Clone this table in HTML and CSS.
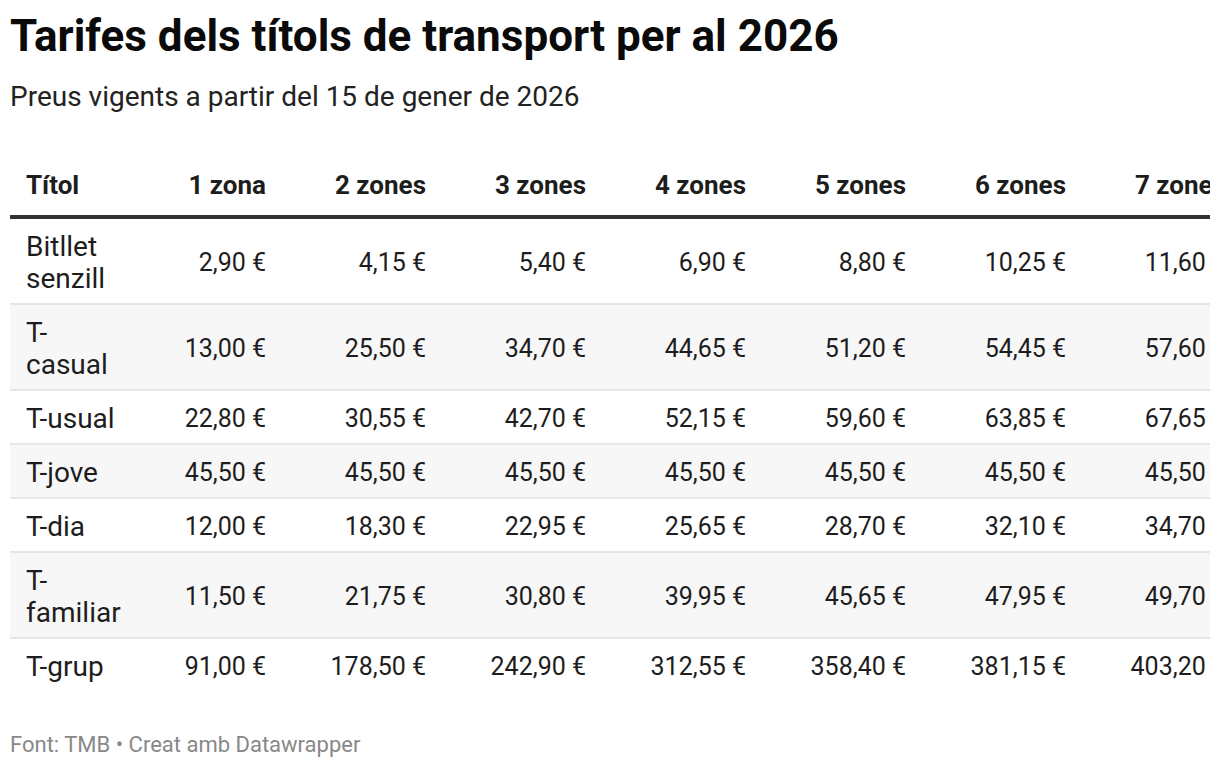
FILE: index.html
```html
<!DOCTYPE html>
<html lang="ca">
<head>
<meta charset="utf-8">
<link rel="stylesheet" href="styles.css">
</head>
<body>
<div class="chart">
  <h1 class="title">Tarifes dels títols de transport per al 2026</h1>
  <p class="subtitle">Preus vigents a partir del 15 de gener de 2026</p>
  <div class="table-wrap">
    <table class="fares">
      <colgroup>
        <col class="c-name"><col class="c-num"><col class="c-num"><col class="c-num"><col class="c-num"><col class="c-num"><col class="c-num"><col class="c-num">
      </colgroup>
      <thead>
        <tr><th class="name">Títol</th><th>1 zona</th><th>2 zones</th><th>3 zones</th><th>4 zones</th><th>5 zones</th><th>6 zones</th><th>7 zones</th></tr>
      </thead>
      <tbody>
        <tr><td class="name">Bitllet senzill</td><td>2,90 €</td><td>4,15 €</td><td>5,40 €</td><td>6,90 €</td><td>8,80 €</td><td>10,25 €</td><td>11,60 €</td></tr>
        <tr class="alt"><td class="name">T-casual</td><td>13,00 €</td><td>25,50 €</td><td>34,70 €</td><td>44,65 €</td><td>51,20 €</td><td>54,45 €</td><td>57,60 €</td></tr>
        <tr><td class="name">T-usual</td><td>22,80 €</td><td>30,55 €</td><td>42,70 €</td><td>52,15 €</td><td>59,60 €</td><td>63,85 €</td><td>67,65 €</td></tr>
        <tr class="alt"><td class="name">T-jove</td><td>45,50 €</td><td>45,50 €</td><td>45,50 €</td><td>45,50 €</td><td>45,50 €</td><td>45,50 €</td><td>45,50 €</td></tr>
        <tr><td class="name">T-dia</td><td>12,00 €</td><td>18,30 €</td><td>22,95 €</td><td>25,65 €</td><td>28,70 €</td><td>32,10 €</td><td>34,70 €</td></tr>
        <tr class="alt"><td class="name">T-familiar</td><td>11,50 €</td><td>21,75 €</td><td>30,80 €</td><td>39,95 €</td><td>45,65 €</td><td>47,95 €</td><td>49,70 €</td></tr>
        <tr class="last"><td class="name">T-grup</td><td>91,00 €</td><td>178,50 €</td><td>242,90 €</td><td>312,55 €</td><td>358,40 €</td><td>381,15 €</td><td>403,20 €</td></tr>
      </tbody>
    </table>
  </div>
  <p class="footer">Font: TMB • Creat amb Datawrapper</p>
</div>
</body>
</html>
```
FILE: styles.css
```css
html, body {
  margin: 0;
  padding: 0;
  background: #ffffff;
}
body {
  font-family: Roboto, "Liberation Sans", sans-serif;
  color: #1d1d1d;
  width: 1220px;
  height: 768px;
  overflow: hidden;
}
.chart {
  padding: 10px;
}
.title {
  margin: 0;
  font-size: 44px;
  line-height: 52px;
  font-weight: 700;
  color: #0a0a0a;
}
.subtitle {
  margin: 18px 0 0 0;
  font-size: 28px;
  line-height: 33px;
  color: #222;
}
.table-wrap {
  width: 1200px;
  overflow: hidden;
  margin-top: 43px;
}
.fares {
  border-collapse: collapse;
  table-layout: fixed;
  width: 1232px;
}
.c-name { width: 112px; }
.c-num { width: 160px; }
.fares th {
  font-size: 26px;
  line-height: 31px;
  font-weight: 700;
  text-align: right;
  padding: 14px 16px 14px 0;
  border-bottom: 4px solid #333;
  color: #1d1d1d;
  white-space: nowrap;
}
.fares td {
  font-size: 25px;
  line-height: 32px;
  text-align: right;
  padding: 12px 16px 8px 0;
  border-bottom: 2px solid #e6e6e6;
  white-space: nowrap;
}
.fares .name {
  text-align: left;
  padding-left: 16px;
  padding-right: 0;
}
.fares td.name {
  font-size: 28px;
  white-space: normal;
}
.fares tr.alt td {
  background: #f7f7f7;
}
.fares tr.last td {
  border-bottom: none;
}
.footer {
  margin: 41px 0 0 0;
  font-size: 22px;
  line-height: 26px;
  color: #888888;
}
```
